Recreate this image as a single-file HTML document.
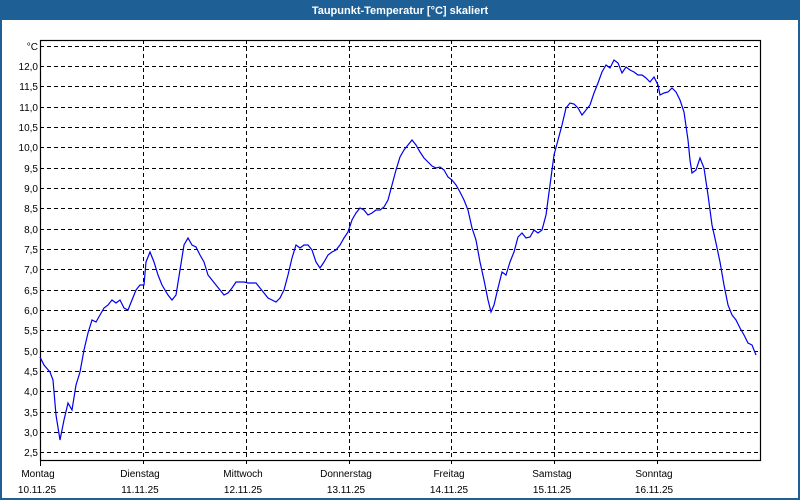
<!DOCTYPE html>
<html><head><meta charset="utf-8"><style>
html,body{margin:0;padding:0;background:#fff;}
svg{display:block;font-family:"Liberation Sans",sans-serif;}
</style></head><body>
<svg width="800" height="500" viewBox="0 0 800 500" xmlns="http://www.w3.org/2000/svg">
<rect x="0" y="0" width="800" height="500" fill="#1e5f96"/>
<rect x="2" y="20" width="796" height="478" fill="#fff"/>
<text x="400" y="14" text-anchor="middle" fill="#fff" font-size="11" font-weight="bold">Taupunkt-Temperatur [°C] skaliert</text>
<g stroke="#000" stroke-width="1" stroke-dasharray="4,3" fill="none">
<path d="M40 46.5H760M40 66.5H760M40 86.5H760M40 107.5H760M40 127.5H760M40 147.5H760M40 168.5H760M40 188.5H760M40 208.5H760M40 229.5H760M40 249.5H760M40 269.5H760M40 290.5H760M40 310.5H760M40 330.5H760M40 351.5H760M40 371.5H760M40 391.5H760M40 412.5H760M40 432.5H760M40 452.5H760"/>
<path d="M143.5 40V466M246.5 40V466M349.5 40V466M451.5 40V466M554.5 40V466M657.5 40V466"/>
</g>
<rect x="40.5" y="40.5" width="720" height="420" fill="none" stroke="#000" stroke-width="1.2"/>
<path d="M40.5 460V466" stroke="#000"/>
<g font-size="10" fill="#000" text-anchor="end">
<text x="38" y="50">°C</text>
<text x="38" y="70">12,0</text><text x="38" y="90">11,5</text><text x="38" y="111">11,0</text><text x="38" y="131">10,5</text><text x="38" y="151">10,0</text><text x="38" y="172">9,5</text><text x="38" y="192">9,0</text><text x="38" y="212">8,5</text><text x="38" y="233">8,0</text><text x="38" y="253">7,5</text><text x="38" y="273">7,0</text><text x="38" y="294">6,5</text><text x="38" y="314">6,0</text><text x="38" y="334">5,5</text><text x="38" y="355">5,0</text><text x="38" y="375">4,5</text><text x="38" y="395">4,0</text><text x="38" y="416">3,5</text><text x="38" y="436">3,0</text><text x="38" y="456">2,5</text>
</g>
<g font-size="10" fill="#000" text-anchor="middle">
<text x="38" y="477">Montag</text><text x="37" y="493">10.11.25</text>
<text x="140" y="477">Dienstag</text><text x="140" y="493">11.11.25</text>
<text x="243" y="477">Mittwoch</text><text x="243" y="493">12.11.25</text>
<text x="346" y="477">Donnerstag</text><text x="346" y="493">13.11.25</text>
<text x="449" y="477">Freitag</text><text x="449" y="493">14.11.25</text>
<text x="552" y="477">Samstag</text><text x="552" y="493">15.11.25</text>
<text x="654" y="477">Sonntag</text><text x="654" y="493">16.11.25</text>
</g>
<polyline fill="none" stroke="#0000ee" stroke-width="1.2" points="40,357 44,365 50,372 53,380 56,415 60,440 64,420 68,403 72,410 76,385 80,372 84,350 88,333 92,320 96,322 100,315 104,308 108,305 112,300 116,303 120,300 124,308 128,310 132,300 136,290 140,285 144,285 146,262 150,252 154,262 158,275 162,285 168,295 172,300 176,295 180,270 184,245 188,238 192,245 196,247 200,255 204,262 208,275 212,280 216,285 220,290 224,295 228,293 232,288 236,282 240,282 244,282 248,283 252,283 256,283 260,288 264,293 268,298 272,300 276,302 280,298 284,290 288,275 292,258 296,245 300,248 304,245 308,245 312,250 316,262 320,268 324,262 328,255 332,252 336,250 340,245 344,238 348,232 352,220 356,213 360,208 364,210 368,215 372,213 376,210 380,210 384,207 388,200 392,185 396,170 400,157 404,150 408,145 412,140 416,145 420,152 424,158 428,162 432,166 436,168 440,167 444,170 448,177 452,180 456,185 460,192 464,200 468,210 472,228 476,240 480,262 484,280 488,300 491,312 494,305 498,288 502,272 506,275 510,262 514,252 518,237 522,233 526,238 530,237 534,230 538,233 542,230 546,215 550,185 554,155 558,140 562,125 566,108 570,103 574,104 578,108 582,115 586,110 590,105 594,93 598,83 602,72 606,65 610,68 614,60 618,63 622,73 626,67 630,70 634,72 638,75 642,75 646,78 650,82 654,77 658,85 660,95 664,93 668,92 672,88 676,92 680,100 684,112 688,140 690,160 692,173 696,170 700,158 704,168 708,195 712,225 716,243 720,262 724,285 728,305 732,315 736,320 740,328 744,335 748,343 752,345 756,355"/>
</svg>
</body></html>
